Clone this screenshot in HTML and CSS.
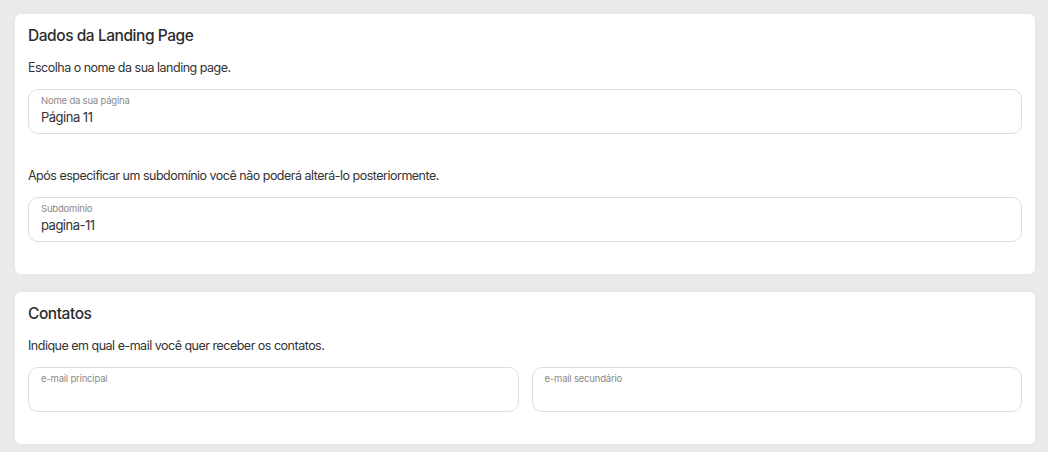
FILE: index.html
```html
<!DOCTYPE html>
<html lang="pt-BR">
<head>
<meta charset="utf-8">
<title>Landing Page</title>
<link rel="stylesheet" href="styles.css">
</head>
<body>
<main class="page">
  <section class="card">
    <h2 class="card-title">Dados da Landing Page</h2>
    <p class="card-text">Escolha o nome da sua landing page.</p>
    <div class="field">
      <span class="field-label">Nome da sua página</span>
      <span class="field-value">Página 11</span>
    </div>
    <p class="card-text card-text--spaced">Após especificar um subdomínio você não poderá alterá-lo posteriormente.</p>
    <div class="field">
      <span class="field-label">Subdomínio</span>
      <span class="field-value">pagina-11</span>
    </div>
  </section>
  <section class="card">
    <h2 class="card-title">Contatos</h2>
    <p class="card-text">Indique em qual e-mail você quer receber os contatos.</p>
    <div class="field-row">
      <div class="field">
        <span class="field-label">e-mail principal</span>
        <span class="field-value"></span>
      </div>
      <div class="field">
        <span class="field-label">e-mail secundário</span>
        <span class="field-value"></span>
      </div>
    </div>
  </section>
</main>
</body>
</html>
```

FILE: styles.css
```css
* { box-sizing: border-box; }
html, body {
  margin: 0;
  padding: 0;
  background: #ebebeb;
  font-family: Inter, "Noto Sans", "Liberation Sans", sans-serif;
  color: #2f2f2f;
}
.page {
  padding: 14px 13px 9px 15px;
  display: flex;
  flex-direction: column;
  gap: 18px;
}
.card {
  background: #ffffff;
  border-radius: 6px;
  padding: 11px 13px 32px 13px;
  box-shadow: 0 0 10px rgba(0, 0, 0, 0.04);
}
.card-title {
  margin: 0;
  font-size: 15.5px;
  line-height: 22px;
  font-weight: 500;
  color: #2b2b2b;
  letter-spacing: -0.45px;
}
.card-text {
  margin: 12px 0 12px;
  font-size: 12.5px;
  line-height: 18px;
  color: #333333;
  letter-spacing: -0.5px;
}
.card-text--spaced {
  margin-top: 33px;
}
.field {
  border: 1px solid #dedede;
  border-radius: 10px;
  height: 45px;
  padding: 5px 12px 0;
  display: flex;
  flex-direction: column;
}
.field-label {
  font-size: 9.5px;
  line-height: 12px;
  color: #8a8a8a;
  letter-spacing: -0.2px;
}
.field-value {
  font-size: 13px;
  line-height: 20px;
  color: #333333;
  letter-spacing: -0.5px;
}
.field-row {
  display: grid;
  grid-template-columns: 1fr 1fr;
  gap: 13px;
}
```
